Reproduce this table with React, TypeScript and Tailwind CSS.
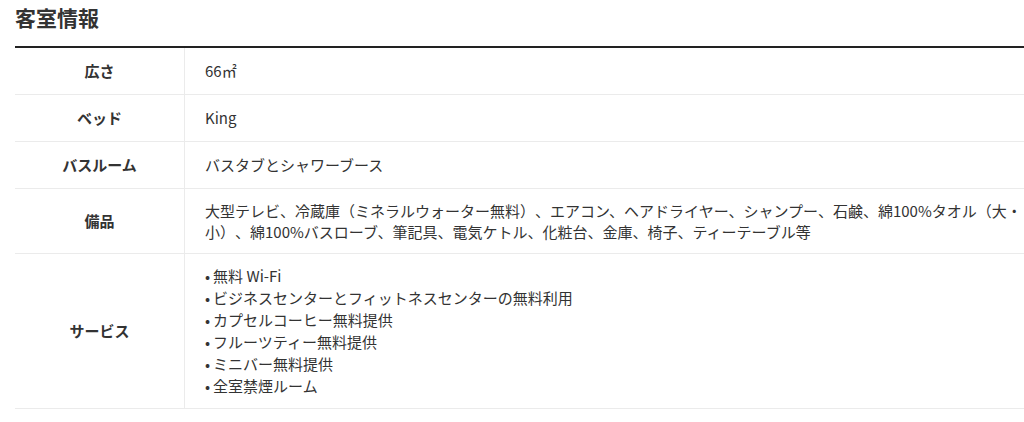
import React from "react";

const font = {
  fontFamily: '"Noto Sans CJK JP", "Noto Sans", sans-serif',
};

const services = [
  "無料 Wi-Fi",
  "ビジネスセンターとフィットネスセンターの無料利用",
  "カプセルコーヒー無料提供",
  "フルーツティー無料提供",
  "ミニバー無料提供",
  "全室禁煙ルーム",
];

function Row({
  label,
  children,
  leading = "leading-6",
}: {
  label: string;
  children: React.ReactNode;
  leading?: string;
}) {
  return (
    <div className="flex border-b border-[#ebebeb]">
      <div className="flex w-[170px] shrink-0 items-center justify-center border-r border-[#ebebeb] text-[15px] font-bold leading-6">
        {label}
      </div>
      <div className={`w-[850px] py-[11px] pl-5 pr-[12px] text-[15px] ${leading}`}>
        {children}
      </div>
    </div>
  );
}

export default function App() {
  return (
    <div
      className="h-[422px] w-[1024px] overflow-hidden bg-white text-[#333] [text-spacing-trim:space-all]"
      style={font}
    >
      <div className="ml-[15px] w-[1040px]">
        <h2 className="pt-[3px] text-[21px] font-bold leading-[28px]">客室情報</h2>
        <div className="mt-[15px] border-t-2 border-[#222]">
          <Row label="広さ">66㎡</Row>
          <Row label="ベッド">King</Row>
          <Row label="バスルーム">バスタブとシャワーブース</Row>
          <Row label="備品" leading="leading-[21px]">
            大型テレビ、冷蔵庫（ミネラルウォーター無料）、エアコン、ヘアドライヤー、シャンプー、石鹸、綿100%タオル（大・小）、綿100%バスローブ、筆記具、電気ケトル、化粧台、金庫、椅子、ティーテーブル等
          </Row>
          <Row label="サービス" leading="leading-[22px]">
            <ul>
              {services.map((s) => (
                <li key={s}>
                  <span className="mr-[3px]">•</span>
                  {s}
                </li>
              ))}
            </ul>
          </Row>
        </div>
      </div>
    </div>
  );
}
